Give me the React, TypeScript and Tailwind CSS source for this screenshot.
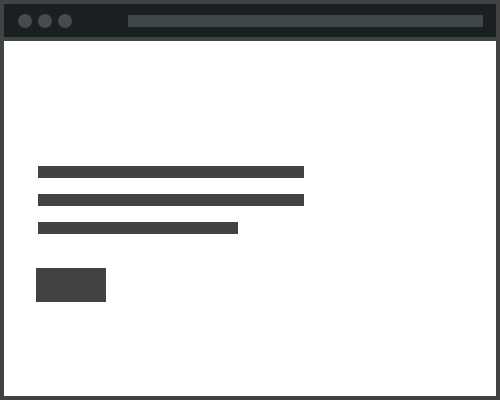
export default function App() {
  return (
    <div className="w-[500px] h-[400px] border-4 border-[#404244] bg-white flex flex-col">
      <div className="h-[37px] shrink-0 bg-[#1a1f22] border-b-4 border-[#404244] flex items-center pl-[14px] pr-[13px]">
        <div className="flex gap-[6px]">
          <div className="w-[14px] h-[14px] rounded-full bg-[#484b4e]" />
          <div className="w-[14px] h-[14px] rounded-full bg-[#484b4e]" />
          <div className="w-[14px] h-[14px] rounded-full bg-[#484b4e]" />
        </div>
        <div className="ml-[56px] flex-1 h-[12px] bg-[#3f4648]" />
      </div>
      <div className="flex-1 pl-[34px] pt-[125px] flex flex-col">
        <div className="w-[266px] h-[12px] bg-[#404244]" />
        <div className="w-[266px] h-[12px] bg-[#404244] mt-[16px]" />
        <div className="w-[200px] h-[12px] bg-[#404244] mt-[16px]" />
        <div className="w-[70px] h-[34px] bg-[#404244] mt-[34px] -ml-[2px]" />
      </div>
    </div>
  );
}
